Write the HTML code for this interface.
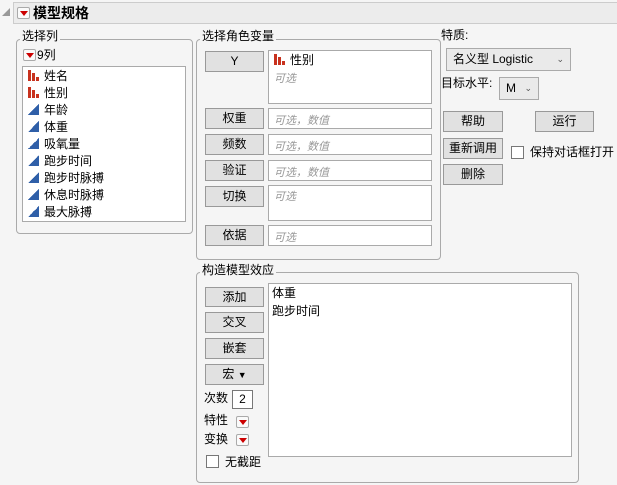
<!DOCTYPE html>
<html><head><meta charset="utf-8"><style>
*{box-sizing:border-box;margin:0;padding:0}
body{width:617px;height:485px;background:#f5f5f5;font-family:"Liberation Sans","Noto Sans CJK SC",sans-serif;font-size:12px;color:#000;position:relative;overflow:hidden}
.a{position:absolute}
.grp{position:absolute;border:1px solid #aaa;border-radius:4px}
.lbl{position:absolute;background:#f5f5f5;padding:0 2px;line-height:14px}
.btn{position:absolute;background:#e1e1e1;border:1px solid #999;text-align:center;line-height:19px;font-size:12px}
.fld{position:absolute;background:#fff;border:1px solid #aaa}
.ph{color:#999;font-style:italic;position:absolute;left:5px;font-size:11px}
.rb{position:absolute;width:13px;height:12px;border:1px solid #aaa;border-radius:2px;background:#fafafa}
.rb:after{content:"";position:absolute;left:2px;top:3px;border-left:4px solid transparent;border-right:4px solid transparent;border-top:5px solid #c00}
.cb{position:absolute;width:13px;height:13px;border:1px solid #777;background:#fff}
.it{position:absolute;left:5px;line-height:17px;height:17px;white-space:nowrap}
.tri{display:inline-block;width:11px;height:11px;vertical-align:-1px;margin-right:5px;background:linear-gradient(to top left,#2f5fa8 50%,transparent 50%)}
.bar{display:inline-block;width:11px;height:11px;vertical-align:-1px;margin-right:5px;position:relative}
.bar i{position:absolute;bottom:0;background:#c8321e;width:3px}
.dd{position:absolute;background:#eaeaea;border:1px solid #aaa}
</style></head><body>
<div class="a" style="left:2px;top:8px;width:0;height:0;border-left:8px solid transparent;border-bottom:8px solid #999"></div>
<div class="a" style="left:13px;top:2px;width:604px;height:22px;background:#ececec;border:1px solid #ccc;border-right:none"></div>
<div class="rb" style="left:17px;top:7px"></div>
<div class="a" style="left:33px;top:4px;font-weight:bold;font-size:14px;line-height:18px">模型规格</div>

<div class="grp" style="left:16px;top:39px;width:177px;height:195px"></div>
<div class="lbl" style="left:20px;top:29px">选择列</div>
<div class="rb" style="left:23px;top:49px"></div>
<div class="a" style="left:37px;top:48px;line-height:14px">9列</div>
<div class="fld" style="left:22px;top:66px;width:164px;height:156px">
<div class="it" style="top:1px"><span class="bar"><i style="left:0;height:11px"></i><i style="left:4px;height:8px"></i><i style="left:8px;height:4px"></i></span>姓名</div>
<div class="it" style="top:18px"><span class="bar"><i style="left:0;height:11px"></i><i style="left:4px;height:8px"></i><i style="left:8px;height:4px"></i></span>性别</div>
<div class="it" style="top:35px"><span class="tri"></span>年龄</div>
<div class="it" style="top:52px"><span class="tri"></span>体重</div>
<div class="it" style="top:69px"><span class="tri"></span>吸氧量</div>
<div class="it" style="top:86px"><span class="tri"></span>跑步时间</div>
<div class="it" style="top:103px"><span class="tri"></span>跑步时脉搏</div>
<div class="it" style="top:120px"><span class="tri"></span>休息时脉搏</div>
<div class="it" style="top:137px"><span class="tri"></span>最大脉搏</div>
</div>

<div class="grp" style="left:196px;top:39px;width:245px;height:221px"></div>
<div class="lbl" style="left:200px;top:29px">选择角色变量</div>
<div class="btn" style="left:205px;top:51px;width:59px;height:21px">Y</div>
<div class="fld" style="left:268px;top:50px;width:164px;height:54px">
<div class="it" style="top:1px"><span class="bar"><i style="left:0;height:11px"></i><i style="left:4px;height:8px"></i><i style="left:8px;height:4px"></i></span>性别</div>
<div class="ph" style="top:19px">可选</div></div>
<div class="btn" style="left:205px;top:108px;width:59px;height:21px">权重</div>
<div class="fld" style="left:268px;top:108px;width:164px;height:21px"><div class="ph" style="top:3px">可选，数值</div></div>
<div class="btn" style="left:205px;top:134px;width:59px;height:21px">频数</div>
<div class="fld" style="left:268px;top:134px;width:164px;height:21px"><div class="ph" style="top:3px">可选，数值</div></div>
<div class="btn" style="left:205px;top:160px;width:59px;height:21px">验证</div>
<div class="fld" style="left:268px;top:160px;width:164px;height:21px"><div class="ph" style="top:3px">可选，数值</div></div>
<div class="btn" style="left:205px;top:186px;width:59px;height:21px">切换</div>
<div class="fld" style="left:268px;top:185px;width:164px;height:36px"><div class="ph" style="top:2px">可选</div></div>
<div class="btn" style="left:205px;top:225px;width:59px;height:21px">依据</div>
<div class="fld" style="left:268px;top:225px;width:164px;height:21px"><div class="ph" style="top:3px">可选</div></div>

<div class="a" style="left:441px;top:28px;line-height:14px">特质:</div>
<div class="dd" style="left:446px;top:48px;width:125px;height:23px;line-height:21px;padding-left:6px">名义型 Logistic<span class="a" style="right:6px;top:0;font-size:9px;color:#555">⌄</span></div>
<div class="a" style="left:441px;top:76px;line-height:14px">目标水平:</div>
<div class="dd" style="left:499px;top:77px;width:40px;height:23px;line-height:21px;padding-left:6px">M<span class="a" style="right:6px;top:0;font-size:9px;color:#555">⌄</span></div>
<div class="btn" style="left:443px;top:111px;width:60px;height:21px">帮助</div>
<div class="btn" style="left:535px;top:111px;width:59px;height:21px">运行</div>
<div class="btn" style="left:443px;top:138px;width:60px;height:21px">重新调用</div>
<div class="cb" style="left:511px;top:146px"></div>
<div class="a" style="left:530px;top:145px;line-height:14px">保持对话框打开</div>
<div class="btn" style="left:443px;top:164px;width:60px;height:21px">删除</div>

<div class="grp" style="left:196px;top:272px;width:383px;height:211px"></div>
<div class="lbl" style="left:200px;top:263px">构造模型效应</div>
<div class="btn" style="left:205px;top:287px;width:59px;height:20px;line-height:18px">添加</div>
<div class="btn" style="left:205px;top:312px;width:59px;height:21px">交叉</div>
<div class="btn" style="left:205px;top:338px;width:59px;height:21px">嵌套</div>
<div class="btn" style="left:205px;top:364px;width:59px;height:21px">宏 <span style="font-size:9px">▼</span></div>
<div class="a" style="left:204px;top:390px;line-height:16px">次数</div>
<div class="fld" style="left:232px;top:390px;width:21px;height:19px;border-color:#777;text-align:center;line-height:16px">2</div>
<div class="a" style="left:204px;top:412px;line-height:16px">特性</div>
<div class="rb" style="left:236px;top:416px"></div>
<div class="a" style="left:204px;top:431px;line-height:16px">变换</div>
<div class="rb" style="left:236px;top:434px"></div>
<div class="cb" style="left:206px;top:455px"></div>
<div class="a" style="left:225px;top:454px;line-height:16px">无截距</div>
<div class="fld" style="left:268px;top:283px;width:304px;height:174px">
<div class="it" style="left:3px;top:1px">体重</div>
<div class="it" style="left:3px;top:19px">跑步时间</div>
</div>
</body></html>
